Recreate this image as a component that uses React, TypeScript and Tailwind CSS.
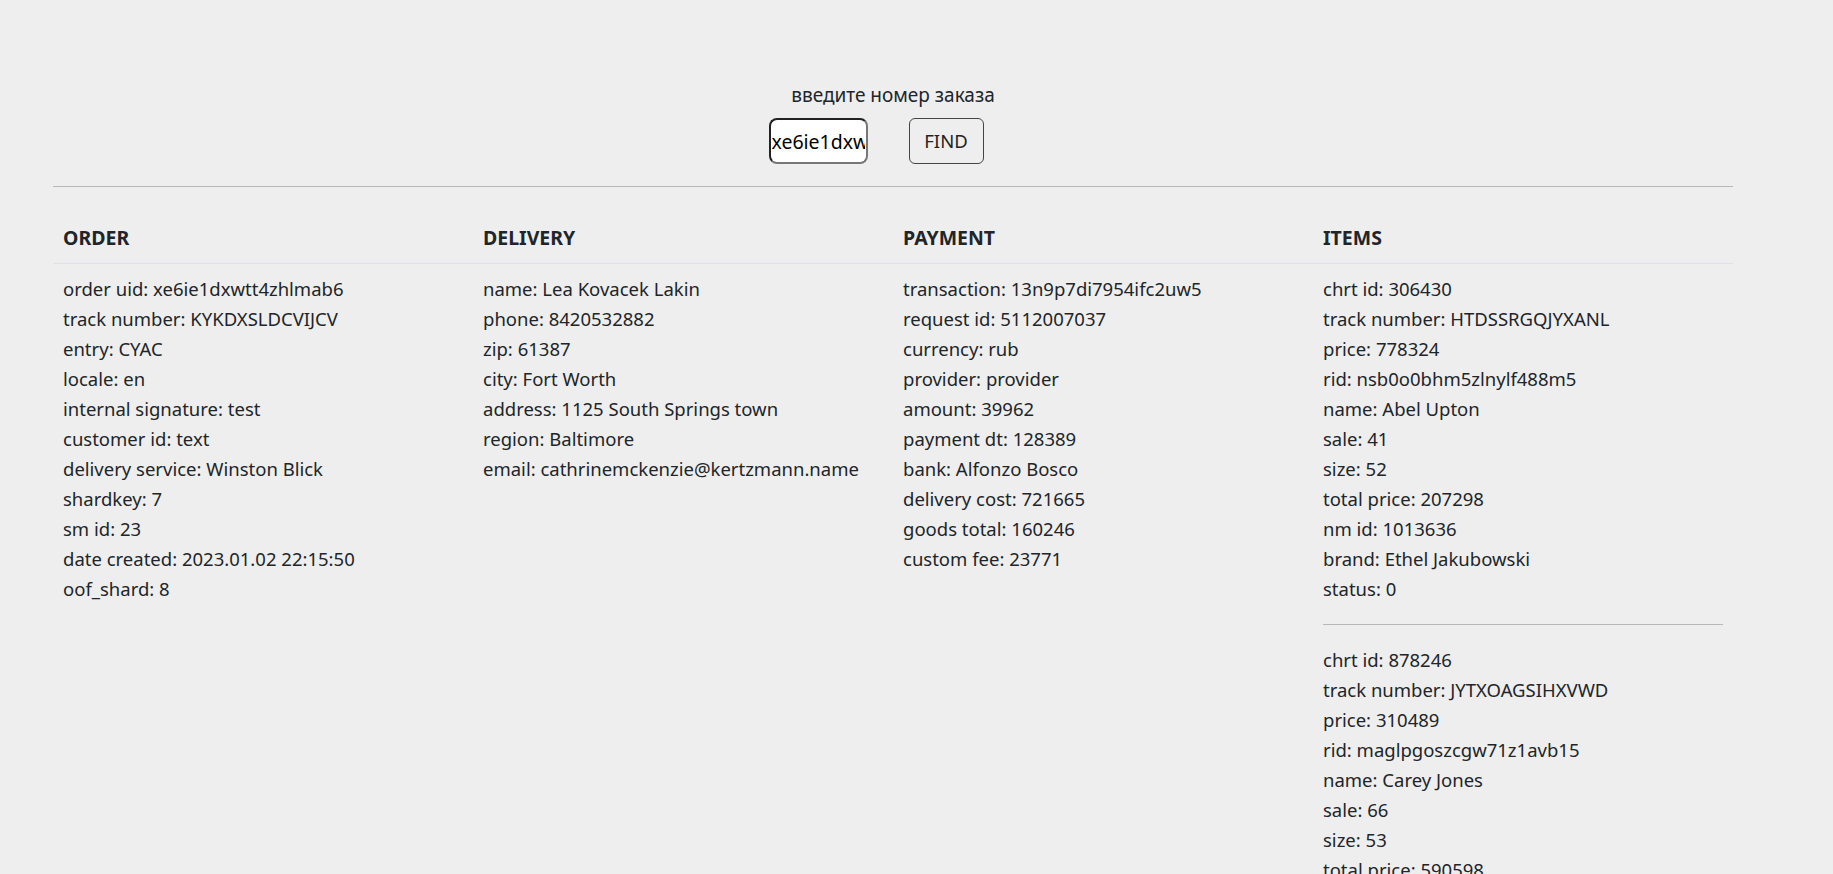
const order = [
  ['order uid', 'xe6ie1dxwtt4zhlmab6'],
  ['track number', 'KYKDXSLDCVIJCV'],
  ['entry', 'CYAC'],
  ['locale', 'en'],
  ['internal signature', 'test'],
  ['customer id', 'text'],
  ['delivery service', 'Winston Blick'],
  ['shardkey', '7'],
  ['sm id', '23'],
  ['date created', '2023.01.02 22:15:50'],
  ['oof_shard', '8'],
]

const delivery = [
  ['name', 'Lea Kovacek Lakin'],
  ['phone', '8420532882'],
  ['zip', '61387'],
  ['city', 'Fort Worth'],
  ['address', '1125 South Springs town'],
  ['region', 'Baltimore'],
  ['email', 'cathrinemckenzie@kertzmann.name'],
]

const payment = [
  ['transaction', '13n9p7di7954ifc2uw5'],
  ['request id', '5112007037'],
  ['currency', 'rub'],
  ['provider', 'provider'],
  ['amount', '39962'],
  ['payment dt', '128389'],
  ['bank', 'Alfonzo Bosco'],
  ['delivery cost', '721665'],
  ['goods total', '160246'],
  ['custom fee', '23771'],
]

const items = [
  [
    ['chrt id', '306430'],
    ['track number', 'HTDSSRGQJYXANL'],
    ['price', '778324'],
    ['rid', 'nsb0o0bhm5zlnylf488m5'],
    ['name', 'Abel Upton'],
    ['sale', '41'],
    ['size', '52'],
    ['total price', '207298'],
    ['nm id', '1013636'],
    ['brand', 'Ethel Jakubowski'],
    ['status', '0'],
  ],
  [
    ['chrt id', '878246'],
    ['track number', 'JYTXOAGSIHXVWD'],
    ['price', '310489'],
    ['rid', 'maglpgoszcgw71z1avb15'],
    ['name', 'Carey Jones'],
    ['sale', '66'],
    ['size', '53'],
    ['total price', '590598'],
    ['nm id', '4728190'],
    ['brand', 'Marlene Kuhn'],
    ['status', '0'],
  ],
]

const Rows = ({ rows }: { rows: string[][] }) => (
  <div>
    {rows.map(([k, v]) => (
      <div key={k} className="leading-[30px] whitespace-nowrap">
        {k}: {v}
      </div>
    ))}
  </div>
)

export default function App() {
  return (
    <div className="min-h-screen bg-[#eeeeee] text-[#212529] text-[18.5px] font-['Noto_Sans',sans-serif]">
      <div className="ml-[53px] w-[1680px] pt-[80px]">
        <div className="flex flex-col items-center">
          <label className="leading-[30px] text-[19px]">введите номер заказа</label>
          <div className="flex items-center gap-[41px] mt-[8px] mr-[34px]">
            <input
              defaultValue="xe6ie1dxwtt4zhlmab6"
              className="w-[99px] h-[46px] bg-white rounded-[8px] border-2 border-t-[#222] border-l-[#222] border-b-[#777] border-r-[#777] px-[1px] text-[19.5px] text-black outline-none"
            />
            <button className="w-[75px] h-[46px] rounded-[6px] border border-[#444] text-[18.5px] text-[#222]">
              FIND
            </button>
          </div>
        </div>
        <div className="mt-[22px] border-t border-[#b8b8b8]" />

        <div className="mt-[26px] grid grid-cols-4">
          {['ORDER', 'DELIVERY', 'PAYMENT', 'ITEMS'].map((h) => (
            <div key={h} className="px-[10px] py-[10px] border-b border-[#dee2e6] font-bold text-[19.5px] leading-[30px]">
              {h}
            </div>
          ))}
          <div className="p-[10px]">
            <Rows rows={order} />
          </div>
          <div className="p-[10px]">
            <Rows rows={delivery} />
          </div>
          <div className="p-[10px]">
            <Rows rows={payment} />
          </div>
          <div className="p-[10px]">
            {items.map((it, i) => (
              <div key={i}>
                {i > 0 && <div className="my-[20px] border-t border-[#b8b8b8]" />}
                <Rows rows={it} />
              </div>
            ))}
          </div>
        </div>
      </div>
    </div>
  )
}
